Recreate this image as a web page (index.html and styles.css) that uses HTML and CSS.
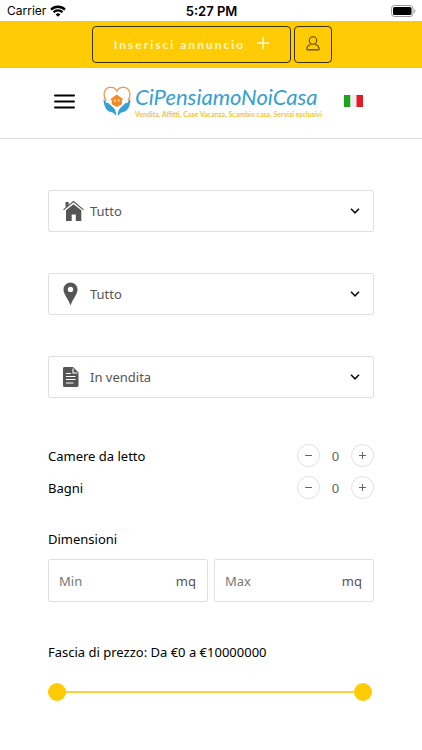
FILE: index.html
```html
<!DOCTYPE html>
<html lang="it">
<head>
<meta charset="utf-8">
<meta name="viewport" content="width=device-width, initial-scale=1">
<title>CiPensiamoNoiCasa</title>
<link rel="stylesheet" href="styles.css">
</head>
<body>
<div class="status">
  <div class="carrier"><span>Carrier</span>
    <svg width="16" height="12" viewBox="0 0 16 12" fill="none" stroke="#000" stroke-width="2.3"><path d="M1 4.6a10 10 0 0 1 14 0M3.5 7.2a6.4 6.4 0 0 1 9 0"/><path d="M8 11.8 5.6 9.4a3.4 3.4 0 0 1 4.8 0z" fill="#000" stroke="none"/></svg>
  </div>
  <time class="clock">5:27 PM</time>
  <svg class="battery" width="25" height="12" viewBox="0 0 25 12"><rect x=".5" y=".5" width="21.5" height="11" rx="3" fill="#fff" stroke="#999"/><rect x="2" y="2" width="18.5" height="8" rx="1.6"/><path d="M23.3 4v4c1.5-.6 1.5-3.4 0-4z" fill="#999"/></svg>
</div>
<div class="topbar">
  <a class="btn btn-add" href="#"><span>Inserisci annuncio</span>
    <svg width="12" height="16" viewBox="0 0 12 16" stroke="#fff8c8" stroke-width="1.6"><path d="M6 0v12M0 6h12"/></svg></a>
  <a class="btn btn-user" href="#" aria-label="Profilo">
    <svg width="14" height="17" viewBox="0 0 14 17" fill="none" stroke="#5a4700" stroke-width="1.1"><circle cx="7" cy="4.5" r="3.7"/><path d="M4.6 8.6C2.2 9.4.8 11 .8 13.1c0 .5.3.8.8.8h10.800c.5 0 .8-.3.8-.8 0-2.100-1.400-3.700-3.800-4.500"/></svg></a>
</div>
<header class="header">
  <button class="menu" type="button" aria-label="Menu"><svg width="21" height="15" viewBox="0 0 21 15" stroke="#000" stroke-width="2" stroke-linecap="round"><path d="M1 1.500h19M1 7.500h19M1 13.500h19"/></svg></button>
  <a class="logo" href="#">
    <svg width="28" height="30" viewBox="0 0 30 32"><path d="M3.400 15.500C-.6 10 1 2.500 7 1.500c4-.7 7 1.500 8 4 1-2.500 4-4.700 8-4 6 1 7.600 8.500 3.600 14" fill="none" stroke="#f0954a" stroke-width="1.300"/><path d="m14.800 9 7 5-1.500 1v4.500l-5.500 3-5.500-3V15l-1.500-1z" fill="#f28a28"/><path d="M11.800 14.500h2v2h-2zm4 0h2v2h-2z" fill="#ffd5a6"/><path d="M.5 14c1.500.3 2.500 2.500 3.500 4.500l1.500-.5 6 5.500c1.500 1.500 2.500 4 2.800 8-1.500-.5-2.400-2-3.300-3C6 27.500 1 25.500.5 14zM29.500 14c-1.500.3-2.500 2.500-3.500 4.500l-1.500-.5-6 5.500c-1.500 1.500-2.500 4-2.800 8 1.500-.5 2.400-2 3.300-3 5-1 10-3 10.500-14.500z" fill="#35a0d2"/></svg>
    <span class="brand"><span class="name">CiPensiamoNoiCasa</span><span class="tagline">Vendita, Affitti, Case Vacanza, Scambio casa, Servizi esclusivi</span></span>
  </a>
  <a class="lang" href="#" aria-label="Italiano"><svg width="19" height="12" viewBox="0 0 19 12"><path fill="#1ba51b" d="M0 0h6.500v12H0z"/><path fill="#eee" d="M6.500 0h6v12h-6z"/><path fill="#e21b22" d="M12.500 0H19v12h-6.500z"/></svg></a>
</header>
<main>
<form class="search">
  <label class="field"><svg class="icon" width="22" height="22" viewBox="0 0 22 22" fill="#555"><path d="M2.500 2h3.200v3L2.500 7.700z"/><path d="m10.500 4.200 7.800 6.100V21h-5.500v-6.500H8.700V21H3V10.300z"/><path d="m.5 9.900 10-8.400 10 8.400" fill="none" stroke="#555" stroke-width="1.100"/></svg>
    <select aria-label="Tipologia"><option>Tutto</option></select><svg class="chevron" width="10" height="6" viewBox="0 0 10 6" fill="none" stroke="#111" stroke-width="1.600"><path d="m1 .8 4 4 4-4"/></svg></label>
  <label class="field"><svg class="icon" width="22" height="24" viewBox="0 0 22 24"><path fill="#555" fill-rule="evenodd" d="M7.500.5a7 7 0 0 0-7 7c0 5 5 9.500 7 16 2-6.500 7-11 7-16a7 7 0 0 0-7-7zm0 4.200a2.700 2.700 0 1 1 0 5.400 2.700 2.700 0 0 1 0-5.400z"/></svg>
    <select aria-label="Luogo"><option>Tutto</option></select><svg class="chevron" width="10" height="6" viewBox="0 0 10 6" fill="none" stroke="#111" stroke-width="1.600"><path d="m1 .8 4 4 4-4"/></svg></label>
  <label class="field"><svg class="icon" width="22" height="20" viewBox="0 0 22 20"><path fill="#555" d="M1.500 0H10l5.500 5.500v13c0 .8-.5 1.500-1.500 1.500H1.500C.5 20 0 19.300 0 18.500v-17C0 .7.500 0 1.500 0z"/><path d="M10 1.500V6h4.500M3 6.500h5M3 9.500h9.500M3 12.500h9.500M3 16h7.500" fill="none" stroke="#fff" stroke-width="1.100"/></svg>
    <select aria-label="Contratto"><option>In vendita</option></select><svg class="chevron" width="10" height="6" viewBox="0 0 10 6" fill="none" stroke="#111" stroke-width="1.600"><path d="m1 .8 4 4 4-4"/></svg></label>

  <div class="counters">
    <div class="counter"><span>Camere da letto</span><div class="stepper"><button type="button" aria-label="Meno camere"><svg width="9" height="9" viewBox="0 0 9 9" stroke="#666"><path d="M1 4.500h7"/></svg></button><output>0</output><button type="button" aria-label="Più camere"><svg width="9" height="9" viewBox="0 0 9 9" stroke="#666"><path d="M1 4.500h7M4.500 1v7"/></svg></button></div></div>
    <div class="counter"><span>Bagni</span><div class="stepper"><button type="button" aria-label="Meno bagni"><svg width="9" height="9" viewBox="0 0 9 9" stroke="#666"><path d="M1 4.500h7"/></svg></button><output>0</output><button type="button" aria-label="Più bagni"><svg width="9" height="9" viewBox="0 0 9 9" stroke="#666"><path d="M1 4.500h7M4.500 1v7"/></svg></button></div></div>
  </div>

  <fieldset class="group">
    <legend>Dimensioni</legend>
    <div class="sizes">
      <label class="size"><input type="text" inputmode="numeric" placeholder="Min" aria-label="Dimensione minima"><span>mq</span></label>
      <label class="size"><input type="text" inputmode="numeric" placeholder="Max" aria-label="Dimensione massima"><span>mq</span></label>
    </div>
  </fieldset>

  <fieldset class="group price">
    <legend>Fascia di prezzo: Da €0 a €10000000</legend>
    <div class="range">
      <input type="range" min="0" max="10000000" value="0" aria-label="Prezzo minimo">
      <input type="range" min="0" max="10000000" value="10000000" aria-label="Prezzo massimo">
    </div>
  </fieldset>
</form>
</main>
</body>
</html>
```
FILE: styles.css
```css
* { box-sizing: border-box; }
body {
  margin: 0;
  background: #fff;
  color: #000;
  font: 13px/20px "Noto Sans", sans-serif;
}
a { color: inherit; text-decoration: none; }
button, input, select { font: inherit; color: inherit; }
button { padding: 0; background: none; border: 0; }
svg { display: block; flex: none; }

.status {
  display: grid;
  grid-template-columns: 1fr auto 1fr;
  align-items: center;
  height: 21px;
  padding: 0 6px 0 7px;
  font: 12px/20px Inter, sans-serif;
}
.carrier { display: flex; align-items: center; gap: 4px; }
.clock { font-size: 13px; font-weight: 600; }
.battery { justify-self: end; }

.topbar {
  display: flex;
  justify-content: center;
  gap: 3px;
  padding: 5px 0 5px 2px;
  background: #ffcb05;
}
.btn {
  display: flex;
  align-items: center;
  justify-content: center;
  height: 37px;
  border: 1px solid #3b3000;
  border-radius: 4px;
}
.btn-add {
  gap: 12px;
  width: 199px;
  color: #fff8c8;
  font: 700 12px/20px Lato, sans-serif;
  letter-spacing: 2px;
}
.btn-user { width: 38px; }

.header {
  display: flex;
  align-items: center;
  justify-content: space-between;
  height: 71px;
  padding: 0 59px 4px 54px;
  border-bottom: 1px solid #ddd;
}
.logo { display: flex; align-items: center; gap: 4px; margin-left: 6px; }
.brand { display: flex; flex-direction: column; white-space: nowrap; }
.name { color: #35a0d2; font: italic 22px/26px Lato, sans-serif; }
.tagline { color: #f4c52e; font: 700 7px/8px Lato, sans-serif; }

.search { padding: 51px 48px 40px; }
.field { display: grid; align-items: center; margin-bottom: 41px; }
.field > * { grid-area: 1 / 1; }
.icon { margin-left: 15px; pointer-events: none; z-index: 1; }
.chevron { justify-self: end; margin-right: 14px; pointer-events: none; z-index: 1; }
select {
  width: 100%;
  height: 42px;
  padding: 0 40px 0 41px;
  appearance: none;
  background: #fff;
  border: 1px solid #e0e0e0;
  border-radius: 2px;
  color: #555;
}

.counters { display: grid; gap: 9px; padding-top: 5px; }
.counter, .stepper { display: flex; align-items: center; justify-content: space-between; }
.stepper { width: 77px; color: #666; }
.stepper button {
  display: grid;
  place-items: center;
  width: 23px;
  height: 23px;
  border: 1px solid #e0e0e0;
  border-radius: 50%;
}

.group { min-width: 0; margin: 30px 0 0; padding: 0; border: 0; }
.group legend { padding: 0; margin-bottom: 10px; }
.sizes { display: grid; grid-template-columns: repeat(2, minmax(0, 1fr)); gap: 6px; }
.size {
  display: flex;
  align-items: center;
  height: 43px;
  padding: 0 11px 0 10px;
  border: 1px solid #e0e0e0;
  border-radius: 2px;
  color: #555;
}
.size input { flex: 1; min-width: 0; padding: 0; border: 0; outline: 0; background: none; }
.size input::placeholder { color: #777; opacity: 1; }
.price { margin-top: 40px; }
.range {
  display: grid;
  align-items: center;
  height: 40px;
  margin-right: 2px;
  background: linear-gradient(#ffd23a, #ffd23a) center / 100% 2px no-repeat;
}
.range input {
  grid-area: 1 / 1;
  width: 100%;
  margin: 0;
  appearance: none;
  background: none;
  pointer-events: none;
}
.range input::-webkit-slider-thumb {
  appearance: none;
  width: 18px;
  height: 18px;
  border-radius: 50%;
  background: #ffcb05;
  pointer-events: auto;
}
```
